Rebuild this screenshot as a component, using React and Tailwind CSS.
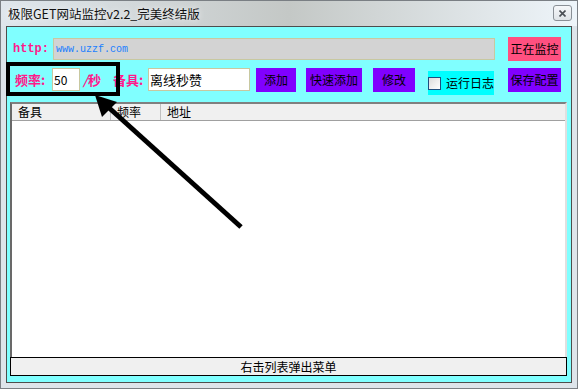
import React from 'react';

const cjk = { fontFamily: '"Noto Sans CJK SC", "Liberation Sans", sans-serif' };
const mono = { fontFamily: '"Liberation Mono", "DejaVu Sans Mono", monospace' };

const PurpleButton = ({ children, className = '' }) => (
  <div
    className={`mt-[1px] flex h-[24px] shrink-0 items-center justify-center whitespace-nowrap bg-[#8000ff] text-[12px] text-black ${className}`}
    style={cjk}
  >
    {children}
  </div>
);

export default function App() {
  return (
    <div className="relative flex h-[389px] w-[578px] flex-col overflow-hidden border border-[#7a7f84] bg-[#dde4ea]">
      {/* Title bar */}
      <div className="flex h-[25px] items-start justify-between bg-gradient-to-r from-[#dfe6ec] via-[#c4c8c6] to-[#eef5fa]">
        <span
          className="ml-[7px] mt-[4px] whitespace-nowrap text-[12.5px] leading-[18px] text-[#111] [text-shadow:0_0_6px_#ffffff]"
          style={cjk}
        >
          极限GET网站监控v2.2_完美终结版
        </span>
        <div className="mr-[5px] mt-[4px] flex h-[16px] w-[19px] items-center justify-center rounded-[3px] border border-[#8a9096] bg-gradient-to-b from-[#f6f8fa] to-[#dfe4e8]">
          <svg width="7" height="7" viewBox="0 0 7 7">
            <path d="M0.5 0.5 L6.5 6.5 M6.5 0.5 L0.5 6.5" stroke="#4a4f55" strokeWidth="1.6" />
          </svg>
        </div>
      </div>

      {/* Client area */}
      <div className="flex flex-1 flex-col px-[5px] pb-[5px]">
        <div className="flex flex-1 flex-col border border-[#4d4d4d] bg-[#80ffff] pb-[6px] pt-[10px]">
          {/* Row 1 */}
          <div className="flex h-[24px] items-center pl-[6px]">
            <span className="w-[40px] text-[12px] font-bold text-[#ff1a8c]" style={mono}>
              http:
            </span>
            <div className="flex h-[22px] w-[442px] items-center border border-[#c8c8a0] bg-[#d3d3d3] pl-[2px] text-[10px] text-[#1a7fff]" style={mono}>
              www.uzzf.com
            </div>
            <div className="ml-[13px] flex h-[24px] w-[53px] items-center justify-center whitespace-nowrap bg-[#ff5080] text-[12px] text-black" style={cjk}>
              正在监控
            </div>
          </div>

          {/* Row 2 */}
          <div className="mt-[6px] flex h-[25px] items-start pl-[8px]">
            <span className="flex h-[25px] w-[37px] shrink-0 items-center whitespace-nowrap text-[13px] font-bold text-[#ff1a8c]" style={cjk}>
              频率:
            </span>
            <div className="mt-[1px] flex h-[23px] w-[28px] shrink-0 items-center border border-[#c8c8a0] bg-white pl-[1px] text-[12px] text-black" style={cjk}>
              50
            </div>
            <span className="ml-[3px] flex h-[25px] w-[30px] shrink-0 items-center whitespace-nowrap text-[13px] font-bold text-[#ff1a8c]" style={cjk}>
              <i>/</i>秒
            </span>
            <span className="flex h-[25px] w-[35px] shrink-0 items-center whitespace-nowrap text-[13px] font-bold text-[#ff1a8c]" style={cjk}>
              备具:
            </span>
            <div className="mt-[1px] flex h-[23px] w-[102px] shrink-0 items-center border border-[#c8c8a0] bg-white pl-[1px] text-[13px] text-black" style={cjk}>
              离线秒赞
            </div>
            <PurpleButton className="ml-[6px] w-[40px]">添加</PurpleButton>
            <PurpleButton className="ml-[10px] w-[56px]">快速添加</PurpleButton>
            <PurpleButton className="ml-[11px] w-[42px]">修改</PurpleButton>
            <div className="ml-[13px] mt-[4px] flex h-[24px] w-[66px] shrink-0 items-center bg-[#00ffff]">
              <div className="h-[13px] w-[13px] shrink-0 border border-[#1f4f7f] bg-gradient-to-br from-[#dcdcdc] to-[#ffffff]" />
              <span className="ml-[5px] whitespace-nowrap text-[12px] text-black" style={cjk}>
                运行日志
              </span>
            </div>
            <PurpleButton className="ml-[14px] w-[53px]">保存配置</PurpleButton>
          </div>

          {/* List */}
          <div className="ml-[3px] mt-[10px] flex w-[557px] flex-1 flex-col border-2 border-b-0 border-l-[#696969] border-r-[#e0e0e0] border-t-[#808080] bg-white">
            <div className="flex h-[17px] border-b border-[#a0a0a0] bg-[#f0f0f0] text-[12px] leading-[16px] text-black" style={cjk}>
              <div className="w-[99px] border-r border-[#c0c0c0] pl-[6px]">备具</div>
              <div className="w-[50px] border-r border-[#c0c0c0] pl-[6px]">频率</div>
              <div className="flex-1 pl-[6px]">地址</div>
            </div>
            <div className="flex-1" />
          </div>

          {/* Status */}
          <div className="ml-[3px] flex h-[19px] w-[557px] items-center justify-center border border-black bg-[#f0f0f0] text-[12px] text-black" style={cjk}>
            右击列表弹出菜单
          </div>
        </div>
      </div>

      {/* Annotation box */}
      <div className="pointer-events-none absolute left-[5px] top-[61px] h-[34px] w-[114px] border-[4px] border-black" />

      {/* Annotation arrow */}
      <svg className="pointer-events-none absolute left-0 top-0" width="578" height="389" viewBox="0 0 578 389">
        <line x1="106" y1="105" x2="240" y2="226" stroke="#000" strokeWidth="5" />
        <polygon points="94,94 101,116 116,101" fill="#000" />
      </svg>
    </div>
  );
}
